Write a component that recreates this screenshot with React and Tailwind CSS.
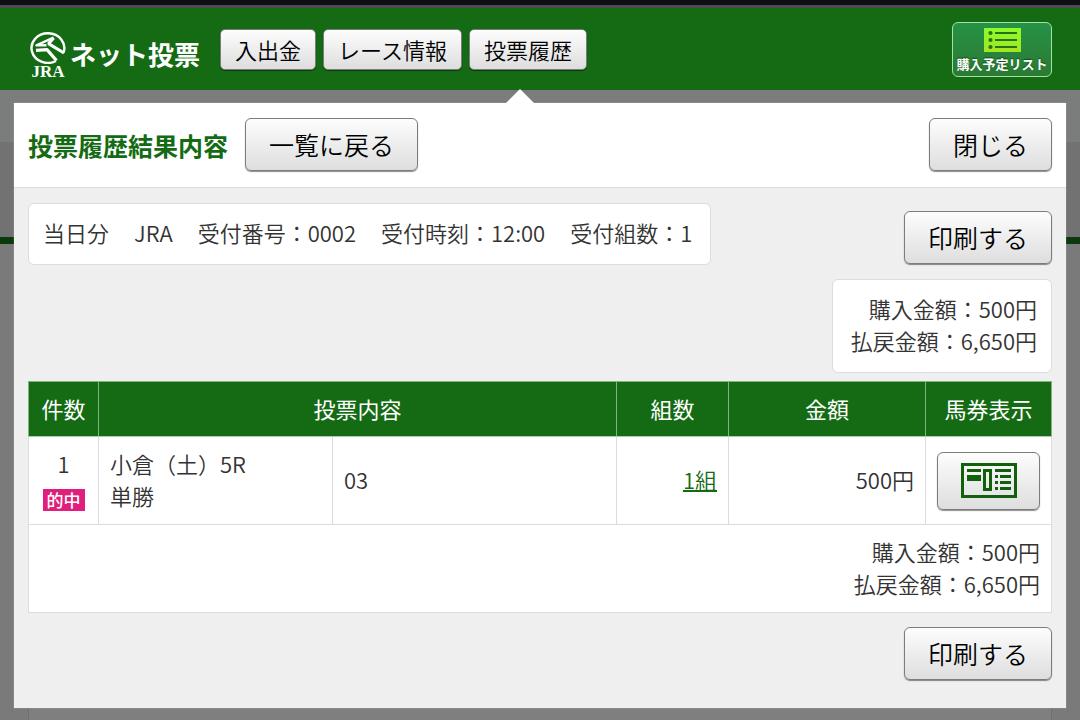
const press =
  "border border-[#7c7c7c] bg-linear-to-b from-[#fdfdfd] to-[#dedede] text-black shadow-[0_1px_1px_rgba(0,0,0,0.45)]";

function ActionButton({ children }) {
  return (
    <button type="button" className={`${press} h-[53px] shrink-0 rounded-md px-[23px] text-[25px] leading-[51px]`}>
      {children}
    </button>
  );
}

function NavButton({ children }) {
  return (
    <button type="button" className={`${press} h-[41px] shrink-0 rounded-[5px] px-[14px] text-[22px] leading-[39px]`}>
      {children}
    </button>
  );
}

function Emblem() {
  return (
    <svg viewBox="0 0 36 32" className="h-8 w-9" aria-hidden="true" fill="none" stroke="#fff">
      <path d="M33.6 20.5 A16.4 14.8 0 1 0 26 29" strokeWidth="2.4" />
      <path d="M23.5 5.5 L6.5 13.4 L16.5 13.2" strokeWidth="2.4" strokeLinejoin="round" />
      <path d="M23.8 6 L18.5 11.6 L34 21" strokeWidth="3" strokeLinejoin="bevel" />
      <path d="M6 18.4 L17 17.6 L26.5 28.5" strokeWidth="3.2" strokeLinejoin="round" />
    </svg>
  );
}

function ListIcon() {
  return (
    <svg viewBox="0 0 37 24" className="h-6 w-[37px]" aria-hidden="true">
      <defs>
        <linearGradient id="lime" x1="0" y1="0" x2="0" y2="1">
          <stop offset="0" stopColor="#8efa2b" />
          <stop offset="1" stopColor="#a5e620" />
        </linearGradient>
      </defs>
      <rect width="37" height="24" fill="url(#lime)" />
      {[5, 12, 19].map((y) => (
        <g key={y} fill="#23731b">
          <circle cx="6.5" cy={y} r="2.1" />
          <rect x="11" y={y - 1} width="22" height="2" />
        </g>
      ))}
    </svg>
  );
}

function TicketIcon() {
  return (
    <svg viewBox="0 0 56 35" className="h-[35px] w-14" aria-hidden="true" fill="#125f0c">
      <path d="M0 0H56V35H0Z M3 3V32H53V3Z" fillRule="evenodd" />
      <rect x="6" y="6" width="14" height="3" />
      <rect x="6" y="12" width="14" height="6" />
      <path d="M22 6H31V28H22Z M25 9V25H28V9Z" fillRule="evenodd" />
      <rect x="34" y="6" width="16" height="3" />
      {[12, 18, 24].map((y) => (
        <g key={y}>
          <rect x="34" y={y} width="3" height="3" />
          <rect x="39" y={y} width="11" height="3" />
        </g>
      ))}
    </svg>
  );
}

function Totals() {
  return (
    <>
      <p>購入金額：500円</p>
      <p>払戻金額：6,650円</p>
    </>
  );
}

const summary = ["当日分", "JRA", "受付番号：0002", "受付時刻：12:00", "受付組数：1"];
const head = "border border-[#7fb57c] border-b-[#a9cfa7] px-0 pt-0 pb-[2px] font-normal";
const cell = "border border-[#dcdcdc] pt-0 pb-1";

export default function App() {
  return (
    <div className="flex min-h-screen flex-col bg-[#7a7a7a] font-['Noto_Sans_CJK_JP',sans-serif] text-[22px] leading-8 font-[350] text-[#333]">
      <header className="border-t-[5px] border-[#0e0e13] bg-[#146b14]">
        <div className="flex items-center border-t-[3px] border-[#4b4b54] pt-[14px] pr-7 pb-2 pl-[30px]">
          <a href="#top" className="flex items-center gap-1 text-white">
            <span className="flex flex-col items-center pt-[10px] pb-[2px]">
              <Emblem />
              <span className="h-4 font-['Liberation_Serif',serif] text-[17px] leading-4 font-bold">JRA</span>
            </span>
            <span className="pt-1 text-[26px] font-bold whitespace-nowrap">ネット投票</span>
          </a>
          <nav className="ml-5 flex gap-[7px] pb-[6px]">
            <NavButton>入出金</NavButton>
            <NavButton>レース情報</NavButton>
            <NavButton>投票履歴</NavButton>
          </nav>
          <button
            type="button"
            className="ml-auto flex h-[55px] w-[100px] shrink-0 flex-col items-center gap-1 self-start rounded-md border border-[#a5e0a5] bg-linear-to-b from-[#259245] to-[#2a7a33] pt-[5px] text-[13px] leading-4 font-bold whitespace-nowrap text-white"
          >
            <ListIcon />
            <span className="[text-shadow:0_-1px_1px_rgba(0,40,0,0.6)]">購入予定リスト</span>
          </button>
        </div>
      </header>

      <main className="grid grow">
        <div className="flex flex-col [grid-area:1/1]" aria-hidden="true">
          <div className="h-[52px] bg-[#7a7d7b]" />
          <div className="h-[95px] bg-[#727272]" />
          <div className="h-[7px] bg-[#0b390b]" />
          <div className="mx-7 grow border-x border-[#707070] bg-[#7f7f7f]" />
        </div>

        <section
          aria-labelledby="dialog-title"
          className="relative mx-[14px] mt-[13px] mb-3 self-start bg-[#efefef] shadow-[0_0_1px_rgba(255,255,255,0.6)] [grid-area:1/1]"
        >
          <svg viewBox="0 0 28 14" className="absolute -top-[14px] left-[492px] h-[14px] w-7" aria-hidden="true">
            <path d="M0 14L14 0L28 14Z" fill="#fff" />
          </svg>
          <div className="flex items-center border-b border-[#dcdcdc] bg-white px-[14px] pt-[15px] pb-4">
            <h1 id="dialog-title" className="mr-[17px] text-[25px] font-bold text-[#146b14]">
              投票履歴結果内容
            </h1>
            <ActionButton>一覧に戻る</ActionButton>
            <div className="ml-auto">
              <ActionButton>閉じる</ActionButton>
            </div>
          </div>

          <div className="px-[14px] pt-[15px] pb-7">
            <div className="flex items-start justify-between gap-4">
              <div className="flex gap-x-[25px] rounded-md border border-[#dcdcdc] bg-white pt-3 pr-[18px] pb-4 pl-[14px] whitespace-nowrap">
                {summary.map((item) => (
                  <span key={item}>{item}</span>
                ))}
              </div>
              <div className="pt-2">
                <ActionButton>印刷する</ActionButton>
              </div>
            </div>

            <div className="mt-[14px] ml-auto w-fit rounded-md border border-[#dcdcdc] bg-white pt-3 pr-[14px] pb-4 pl-[18px] text-right">
              <Totals />
            </div>

            <table className="mt-2 w-full table-fixed border-collapse bg-white">
              <colgroup>
                <col className="w-[70px]" />
                <col className="w-[234px]" />
                <col />
                <col className="w-[112px]" />
                <col className="w-[197px]" />
                <col className="w-[126px]" />
              </colgroup>
              <thead className="bg-[#146b14] text-white">
                <tr className="h-[55px]">
                  <th className={head}>件数</th>
                  <th className={head} colSpan={2}>投票内容</th>
                  <th className={head}>組数</th>
                  <th className={head}>金額</th>
                  <th className={head}>馬券表示</th>
                </tr>
              </thead>
              <tbody>
                <tr className="h-[88px]">
                  <td className={`${cell} text-center`}>
                    <div>1</div>
                    <div className="flex h-8 items-end justify-center">
                      <span className="bg-[#e01f7c] px-1 text-[17px] leading-[22px] font-medium text-white">的中</span>
                    </div>
                  </td>
                  <td className={`${cell} px-[11px]`}>
                    小倉（土）5R
                    <br />
                    単勝
                  </td>
                  <td className={`${cell} px-[11px]`}>03</td>
                  <td className={`${cell} px-[11px] text-right`}>
                    <a href="#sets" className="text-[#146b14] underline decoration-2">1組</a>
                  </td>
                  <td className={`${cell} px-[11px] text-right`}>500円</td>
                  <td className="border border-[#dcdcdc] px-[11px] py-0">
                    <button
                      type="button"
                      aria-label="馬券表示"
                      className={`${press} flex h-[58px] w-full items-center justify-center rounded-md`}
                    >
                      <TicketIcon />
                    </button>
                  </td>
                </tr>
              </tbody>
              <tfoot>
                <tr className="h-[88px]">
                  <td className={`${cell} px-[11px] text-right`} colSpan={6}>
                    <Totals />
                  </td>
                </tr>
              </tfoot>
            </table>

            <div className="mt-[14px] flex justify-end">
              <ActionButton>印刷する</ActionButton>
            </div>
          </div>
        </section>
      </main>
    </div>
  );
}
